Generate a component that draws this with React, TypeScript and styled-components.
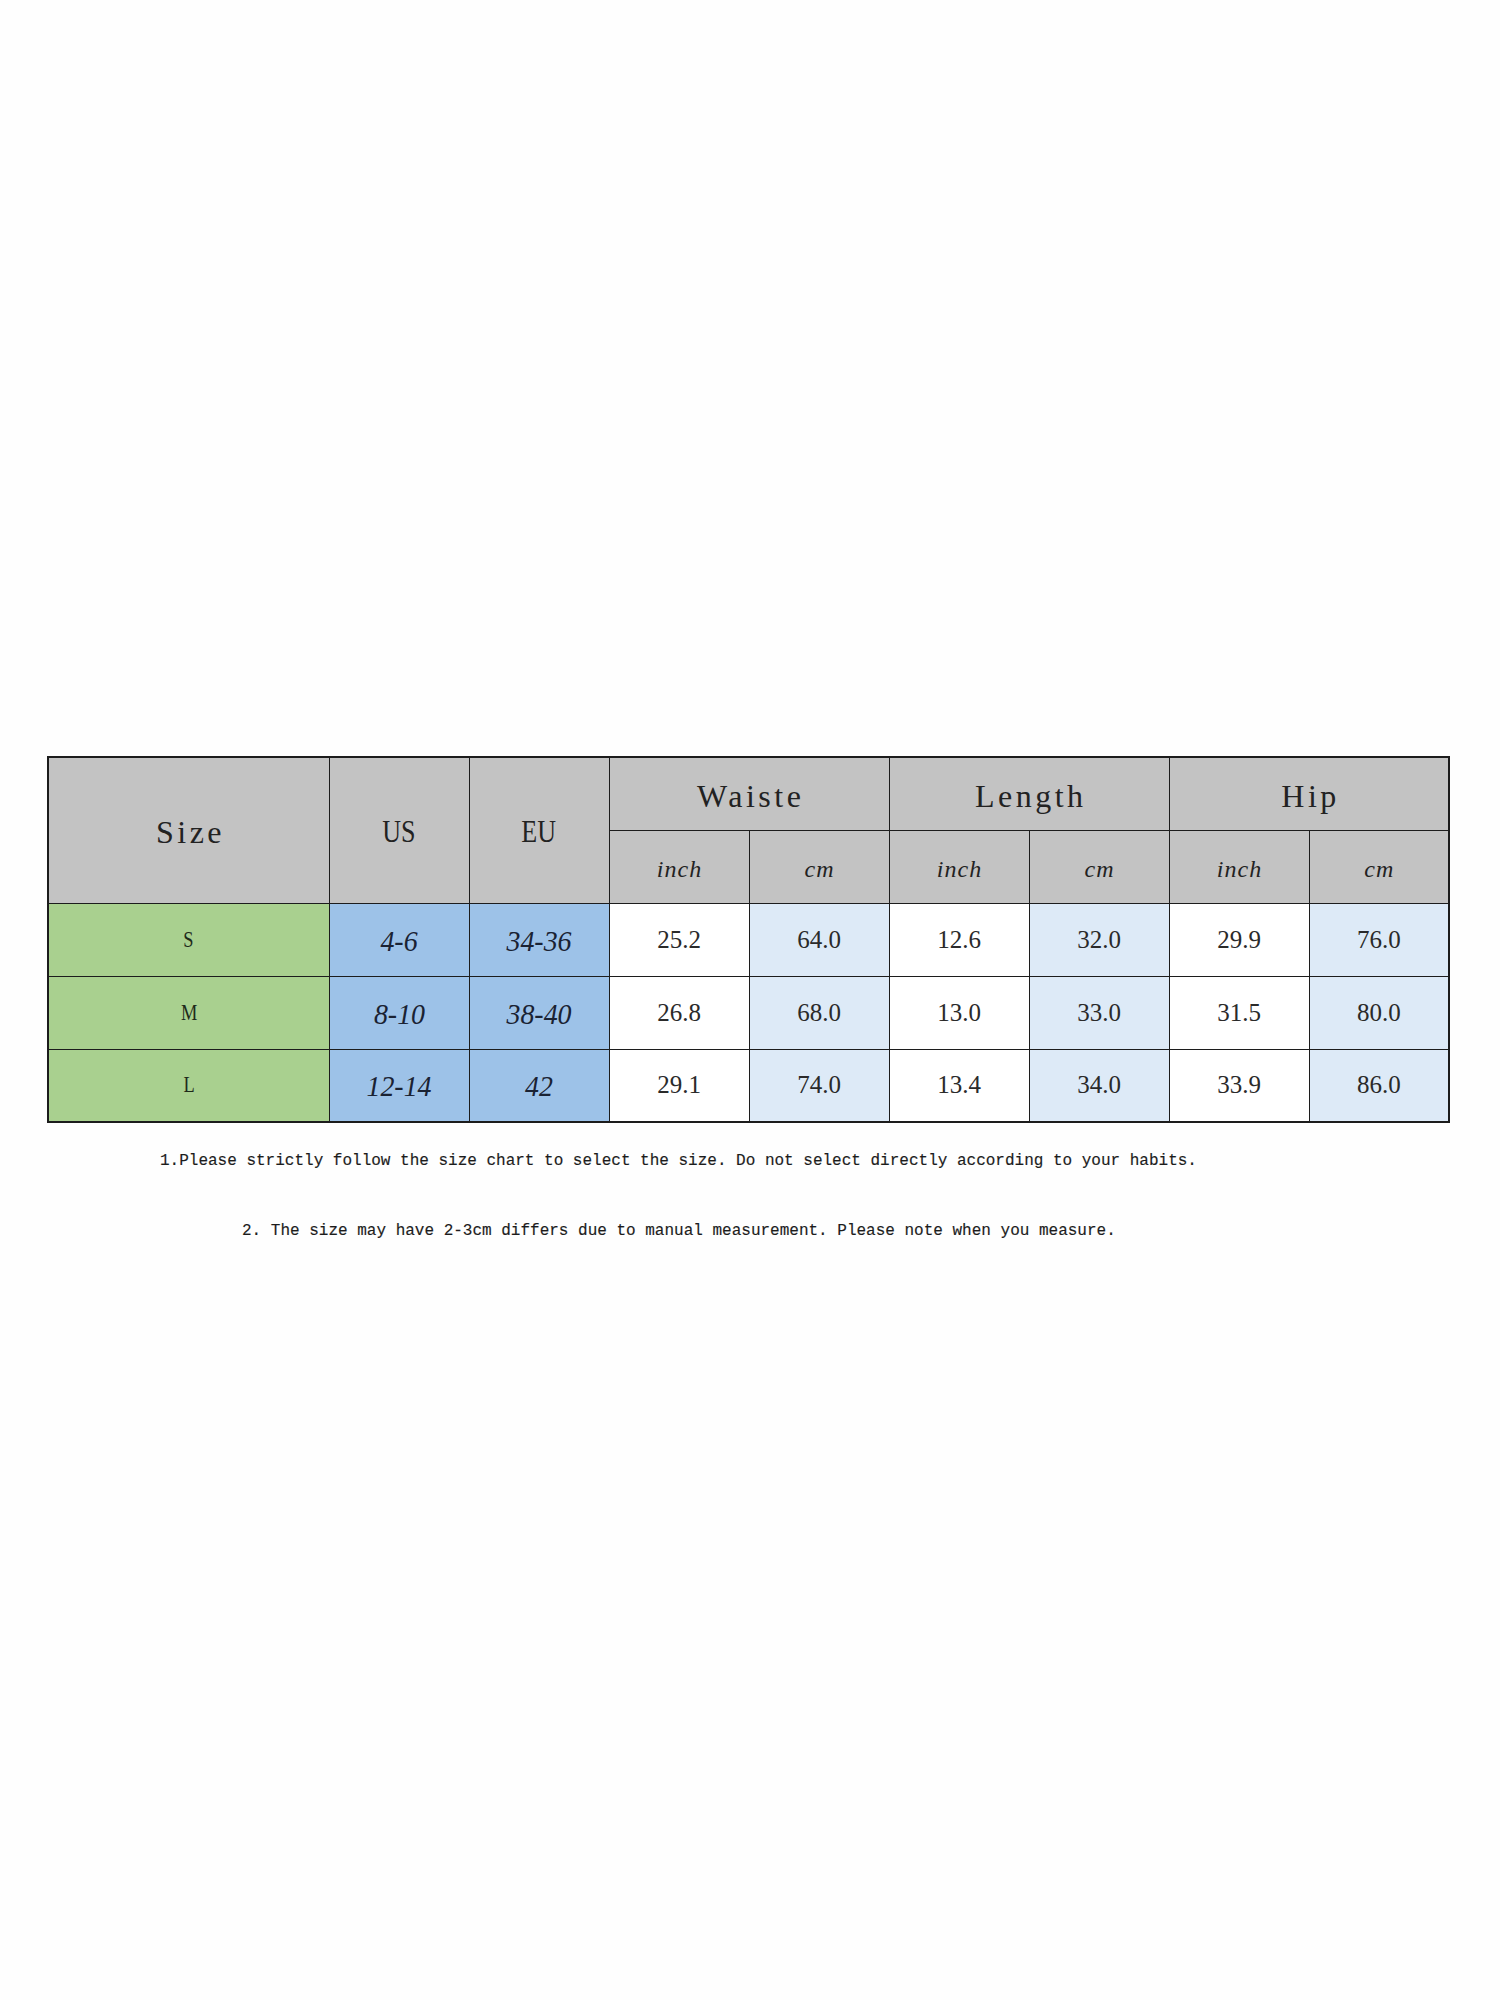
import React from "react";
import styled, { createGlobalStyle } from "styled-components";

const Global = createGlobalStyle`
  html, body { margin: 0; padding: 0; background: #fefefe; }
  body { font-family: "Liberation Serif", serif; color: #1f1f1f; }
`;

type Tone = "gray" | "green" | "blue" | "white" | "pale";
const tones: Record<Tone, string> = {
  gray: "#c3c3c3",
  green: "#a9d08f",
  blue: "#9dc2e8",
  white: "#ffffff",
  pale: "#ddeaf7",
};

const Page = styled.div`
  width: 1500px;
  min-height: 2000px;
  box-sizing: border-box;
  padding: 756px 0 0 47px;
`;

const Chart = styled.table`
  border-collapse: collapse;
  table-layout: fixed;
  width: 1401px;
  border: 2px solid #1c1c1c;
`;

const Row = styled.tr`
  height: 73px;
`;

const Cell = styled.td<{ $tone: Tone }>`
  background: ${(p) => tones[p.$tone]};
  border: 1.5px solid #1c1c1c;
  padding: 0;
  text-align: center;
  vertical-align: middle;
`;

const HeadLabel = styled.span<{ $shift?: number }>`
  display: inline-block;
  font-family: "Liberation Serif", serif;
  font-size: 32px;
  letter-spacing: 3.5px;
  padding-left: 3.5px;
  color: #222;
  transform: translateY(${(p) => p.$shift ?? 0}px);
`;

const CodeLabel = styled.span`
  display: inline-block;
  font-family: "Liberation Serif", serif;
  font-size: 31px;
  color: #222;
  transform: translateY(2px) scaleX(0.84);
`;

const UnitLabel = styled.span`
  display: inline-block;
  font-family: "Liberation Serif", serif;
  font-style: italic;
  font-size: 24px;
  letter-spacing: 1px;
  padding-left: 1px;
  color: #222;
  transform: translateY(3px);
`;

const SizeLetter = styled.span`
  display: inline-block;
  font-family: "Liberation Serif", serif;
  font-size: 23px;
  color: #1e2a1a;
  transform: scaleX(0.8);
`;

const RangeValue = styled.span`
  display: inline-block;
  font-family: "Liberation Serif", serif;
  font-style: italic;
  font-size: 30px;
  color: #1a2233;
  transform: translateY(1px) scaleX(0.93);
`;

const Measure = styled.span`
  display: inline-block;
  font-family: "Liberation Serif", serif;
  font-size: 25px;
  color: #2a2a2a;
`;

const Notes = styled.div`
  margin-top: 28px;
  display: flex;
  flex-direction: column;
  gap: 50px;
`;

const Note = styled.p<{ $indent: number }>`
  margin: 0;
  padding-left: ${(p) => p.$indent}px;
  font-family: "Liberation Mono", monospace;
  font-size: 16px;
  line-height: 20px;
  color: #1c1c1c;
  -webkit-text-stroke: 0.15px #1c1c1c;
  white-space: nowrap;
`;

const rows = [
  { size: "S", us: "4-6", eu: "34-36", vals: ["25.2", "64.0", "12.6", "32.0", "29.9", "76.0"] },
  { size: "M", us: "8-10", eu: "38-40", vals: ["26.8", "68.0", "13.0", "33.0", "31.5", "80.0"] },
  { size: "L", us: "12-14", eu: "42", vals: ["29.1", "74.0", "13.4", "34.0", "33.9", "86.0"] },
];

const groups = ["Waiste", "Length", "Hip"];

export default function App() {
  return (
    <>
      <Global />
      <Page>
        <Chart>
          <colgroup>
            <col style={{ width: 281 }} />
            {Array.from({ length: 8 }).map((_, i) => (
              <col key={i} style={{ width: 140 }} />
            ))}
          </colgroup>
          <tbody>
            <Row>
              <Cell $tone="gray" rowSpan={2}>
                <HeadLabel $shift={2}>Size</HeadLabel>
              </Cell>
              <Cell $tone="gray" rowSpan={2}>
                <CodeLabel>US</CodeLabel>
              </Cell>
              <Cell $tone="gray" rowSpan={2}>
                <CodeLabel>EU</CodeLabel>
              </Cell>
              {groups.map((g) => (
                <Cell key={g} $tone="gray" colSpan={2}>
                  <HeadLabel $shift={3}>{g}</HeadLabel>
                </Cell>
              ))}
            </Row>
            <Row>
              {groups.map((g) => (
                <React.Fragment key={g}>
                  <Cell $tone="gray">
                    <UnitLabel>inch</UnitLabel>
                  </Cell>
                  <Cell $tone="gray">
                    <UnitLabel>cm</UnitLabel>
                  </Cell>
                </React.Fragment>
              ))}
            </Row>
            {rows.map((r) => (
              <Row key={r.size}>
                <Cell $tone="green">
                  <SizeLetter>{r.size}</SizeLetter>
                </Cell>
                <Cell $tone="blue">
                  <RangeValue>{r.us}</RangeValue>
                </Cell>
                <Cell $tone="blue">
                  <RangeValue>{r.eu}</RangeValue>
                </Cell>
                {r.vals.map((v, i) => (
                  <Cell key={i} $tone={i % 2 === 0 ? "white" : "pale"}>
                    <Measure>{v}</Measure>
                  </Cell>
                ))}
              </Row>
            ))}
          </tbody>
        </Chart>
        <Notes>
          <Note $indent={113}>
            1.Please strictly follow the size chart to select the size. Do not select directly according to your habits.
          </Note>
          <Note $indent={195}>
            2. The size may have 2-3cm differs due to manual measurement. Please note when you measure.
          </Note>
        </Notes>
      </Page>
    </>
  );
}
